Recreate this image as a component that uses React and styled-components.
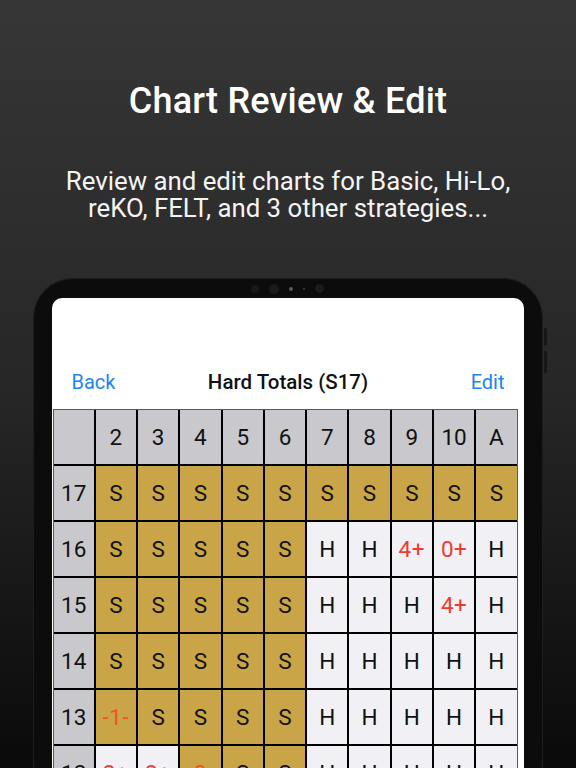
import React from "react";
import styled, { createGlobalStyle } from "styled-components";

const GlobalStyle = createGlobalStyle`
  html, body {
    margin: 0;
    padding: 0;
    background: #0b0b0b;
  }
  body {
    font-family: Roboto, "Noto Sans", "Liberation Sans", sans-serif;
    -webkit-font-smoothing: antialiased;
  }
`;

const Page = styled.div`
  height: 768px;
  overflow: hidden;
  display: flex;
  flex-direction: column;
  align-items: center;
  padding-top: 80px;
  box-sizing: border-box;
  background: linear-gradient(180deg, #363636 0%, #272727 50%, #0a0a0a 100%);
`;

const Title = styled.h1`
  margin: 0;
  font-size: 36px;
  line-height: 43px;
  font-weight: 500;
  color: #ffffff;
  text-align: center;
  letter-spacing: 0.2px;
`;

const Subtitle = styled.p`
  margin: 45px 0 0;
  font-size: 25.8px;
  line-height: 27px;
  font-weight: 400;
  color: #f4f4f4;
  text-align: center;
`;

const Device = styled.div`
  position: relative;
  margin-top: 56px;
  width: 510px;
  flex: 1;
  box-sizing: border-box;
  display: flex;
  flex-direction: column;
  padding: 0 18px;
  background: #0c0c0c;
  border: 1px solid #1d1d1d;
  border-bottom: none;
  border-radius: 40px 40px 0 0;
  margin-left: -1px;
`;

const SideButton = styled.div`
  position: absolute;
  right: -5px;
  top: ${(p) => p.$top}px;
  width: 3px;
  height: ${(p) => p.$h}px;
  background: #171717;
  border-radius: 0 2px 2px 0;
`;

const CameraBar = styled.div`
  height: 19px;
  display: flex;
  align-items: center;
  justify-content: center;
  gap: 10px;
`;

const Dot = styled.span`
  width: ${(p) => p.$size}px;
  height: ${(p) => p.$size}px;
  border-radius: 50%;
  background: ${(p) => p.$color};
`;

const Screen = styled.div`
  flex: 1;
  background: #ffffff;
  border-radius: 10px 10px 0 0;
  padding-top: 62px;
  display: flex;
  flex-direction: column;
`;

const NavBar = styled.div`
  height: 44px;
  display: grid;
  grid-template-columns: 1fr auto 1fr;
  align-items: center;
  padding: 0 19px 0 20px;
`;

const NavButton = styled.span`
  font-size: 20px;
  color: #1c86ee;
  justify-self: ${(p) => (p.$right ? "end" : "start")};
`;

const NavTitle = styled.span`
  font-size: 20.5px;
  font-weight: 500;
  color: #111111;
`;

const ChartGrid = styled.div`
  margin: 5px 6px 0 1px;
  display: grid;
  grid-template-columns: repeat(11, 1fr);
  grid-auto-rows: 54px;
  gap: 2px;
  background: #000000;
  border: 1px solid #5a5a5a;
  border-bottom: none;
`;

const bgs = {
  head: "#c8c8cd",
  gold: "#c9a547",
  light: "#f1f1f5",
};

const Cell = styled.div`
  display: flex;
  align-items: center;
  justify-content: center;
  background: ${(p) => bgs[p.$bg]};
  color: ${(p) => (p.$red ? (p.$bg === "gold" ? "#f0522a" : "#ef3b2f") : "#111111")};
  font-size: 22.5px;
  font-weight: 400;
  letter-spacing: ${(p) => (p.$red ? "0.5px" : "0")};
`;

const header = ["", "2", "3", "4", "5", "6", "7", "8", "9", "10", "A"];

// each entry: [text, bg, red]
const G = (t, red) => [t, "gold", red];
const L = (t, red) => [t, "light", red];

const rows = [
  { label: "17", cells: [G("S"), G("S"), G("S"), G("S"), G("S"), G("S"), G("S"), G("S"), G("S"), G("S")] },
  { label: "16", cells: [G("S"), G("S"), G("S"), G("S"), G("S"), L("H"), L("H"), L("4+", true), L("0+", true), L("H")] },
  { label: "15", cells: [G("S"), G("S"), G("S"), G("S"), G("S"), L("H"), L("H"), L("H"), L("4+", true), L("H")] },
  { label: "14", cells: [G("S"), G("S"), G("S"), G("S"), G("S"), L("H"), L("H"), L("H"), L("H"), L("H")] },
  { label: "13", cells: [G("-1-", true), G("S"), G("S"), G("S"), G("S"), L("H"), L("H"), L("H"), L("H"), L("H")] },
  { label: "12", cells: [L("2+", true), L("2+", true), G("0", true), G("S"), G("S"), L("H"), L("H"), L("H"), L("H"), L("H")] },
];

export default function App() {
  return (
    <>
      <GlobalStyle />
      <Page>
        <Title>Chart Review &amp; Edit</Title>
        <Subtitle>
          Review and edit charts for Basic, Hi-Lo,
          <br />
          reKO, FELT, and 3 other strategies...
        </Subtitle>
        <Device>
          <SideButton $top={49} $h={18} />
          <SideButton $top={72} $h={22} />
          <CameraBar>
            <Dot $size={8} $color="#191919" />
            <Dot $size={10} $color="#1b1b1b" />
            <Dot $size={4} $color="#5a5a5a" />
            <Dot $size={2} $color="#444444" />
            <Dot $size={9} $color="#1b1b1b" />
          </CameraBar>
          <Screen>
            <NavBar>
              <NavButton>Back</NavButton>
              <NavTitle>Hard Totals (S17)</NavTitle>
              <NavButton $right>Edit</NavButton>
            </NavBar>
            <ChartGrid>
              {header.map((h, i) => (
                <Cell key={"h" + i} $bg="head">
                  {h}
                </Cell>
              ))}
              {rows.map((r) => (
                <React.Fragment key={r.label}>
                  <Cell $bg="head">{r.label}</Cell>
                  {r.cells.map(([t, bg, red], i) => (
                    <Cell key={r.label + "-" + i} $bg={bg} $red={red}>
                      {t}
                    </Cell>
                  ))}
                </React.Fragment>
              ))}
            </ChartGrid>
          </Screen>
        </Device>
      </Page>
    </>
  );
}
